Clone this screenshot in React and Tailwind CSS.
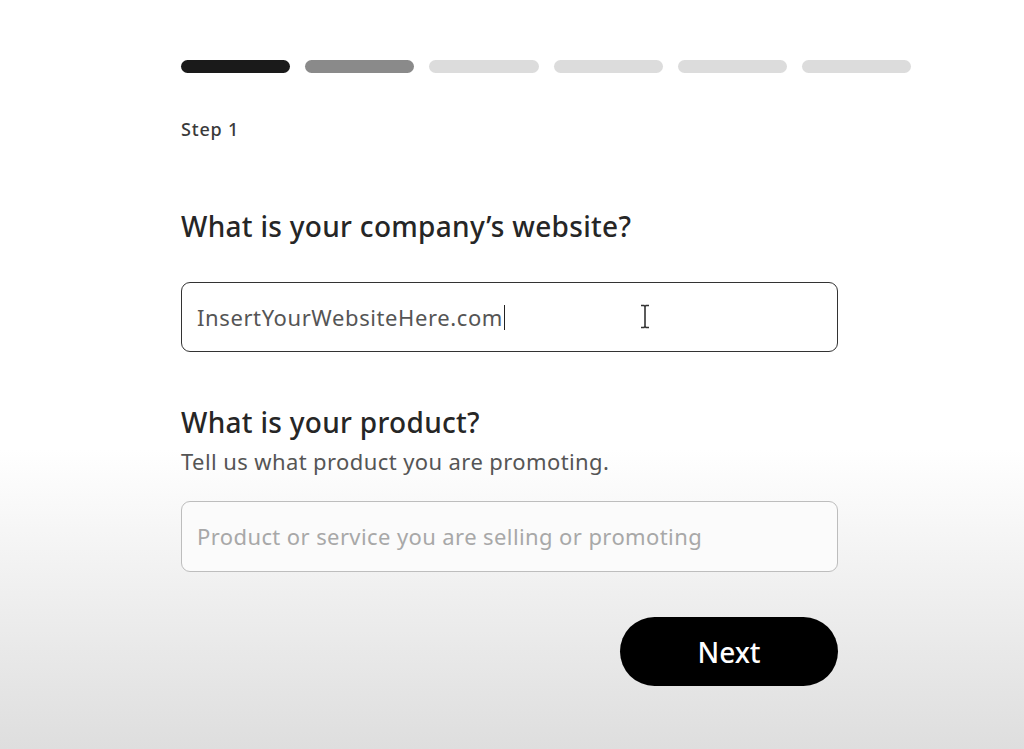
import React from 'react';

const steps = ['bg-[#1a1a1a]', 'bg-[#8a8a8a]', 'bg-[#dcdcdc]', 'bg-[#dcdcdc]', 'bg-[#dcdcdc]', 'bg-[#dcdcdc]'];

const App = () => {
    return (
        <div
            className="w-[1024px] h-[749px] overflow-hidden bg-gradient-to-b from-white from-60% to-[#dedede]"
            style={{ fontFamily: '"Noto Sans", Roboto, sans-serif' }}
        >
            <div className="pl-[181px] pt-[60px]">
                {/* Progress */}
                <div className="flex gap-[15px] w-[730px]">
                    {steps.map((c, i) => (
                        <div key={i} className={`h-[13px] flex-1 rounded-full ${c}`} />
                    ))}
                </div>

                <p className="mt-[43px] text-[18px] leading-[27px] font-medium text-[#3a3a3a] tracking-[0.8px]">Step 1</p>

                {/* Website */}
                <h2 className="mt-[66px] text-[28px] font-medium text-[#262626] leading-[34px] tracking-[0.3px]">
                    What is your company’s website?
                </h2>
                <div className="relative mt-[39px] w-[657px] h-[70px] border-[1.5px] border-[#333] rounded-[9px] flex items-center px-[15px] bg-white">
                    <span className="text-[22px] text-[#555] tracking-[0.6px]">InsertYourWebsiteHere.com</span>
                    <span className="w-px h-[25px] bg-[#222] ml-px" />
                    <svg className="absolute left-[457px] top-[21px]" width="12" height="25" viewBox="0 0 12 25">
                        <path d="M2 1.5h3l1 1 1-1h3M6 2.5v20M2 23.5h3l1-1 1 1h3" fill="none" stroke="#333" strokeWidth="1.6" />
                    </svg>
                </div>

                {/* Product */}
                <h2 className="mt-[53px] text-[28px] font-medium text-[#262626] leading-[34px] tracking-[0.3px]">
                    What is your product?
                </h2>
                <p className="mt-[6px] text-[22px] leading-[32px] text-[#555] tracking-[0.4px]">Tell us what product you are promoting.</p>
                <div className="mt-[24px] w-[657px] h-[71px] border-[1.5px] border-[#bdbdbd] rounded-[9px] flex items-center px-[15px] bg-[#fbfbfb]">
                    <span className="text-[22px] text-[#a8a8a8] tracking-[0.4px]">Product or service you are selling or promoting</span>
                </div>

                <div className="w-[657px] flex justify-end mt-[45px]">
                    <button className="w-[218px] h-[69px] rounded-full bg-black text-white text-[28px] font-medium">
                        Next
                    </button>
                </div>
            </div>
        </div>
    );
};

export default App;
